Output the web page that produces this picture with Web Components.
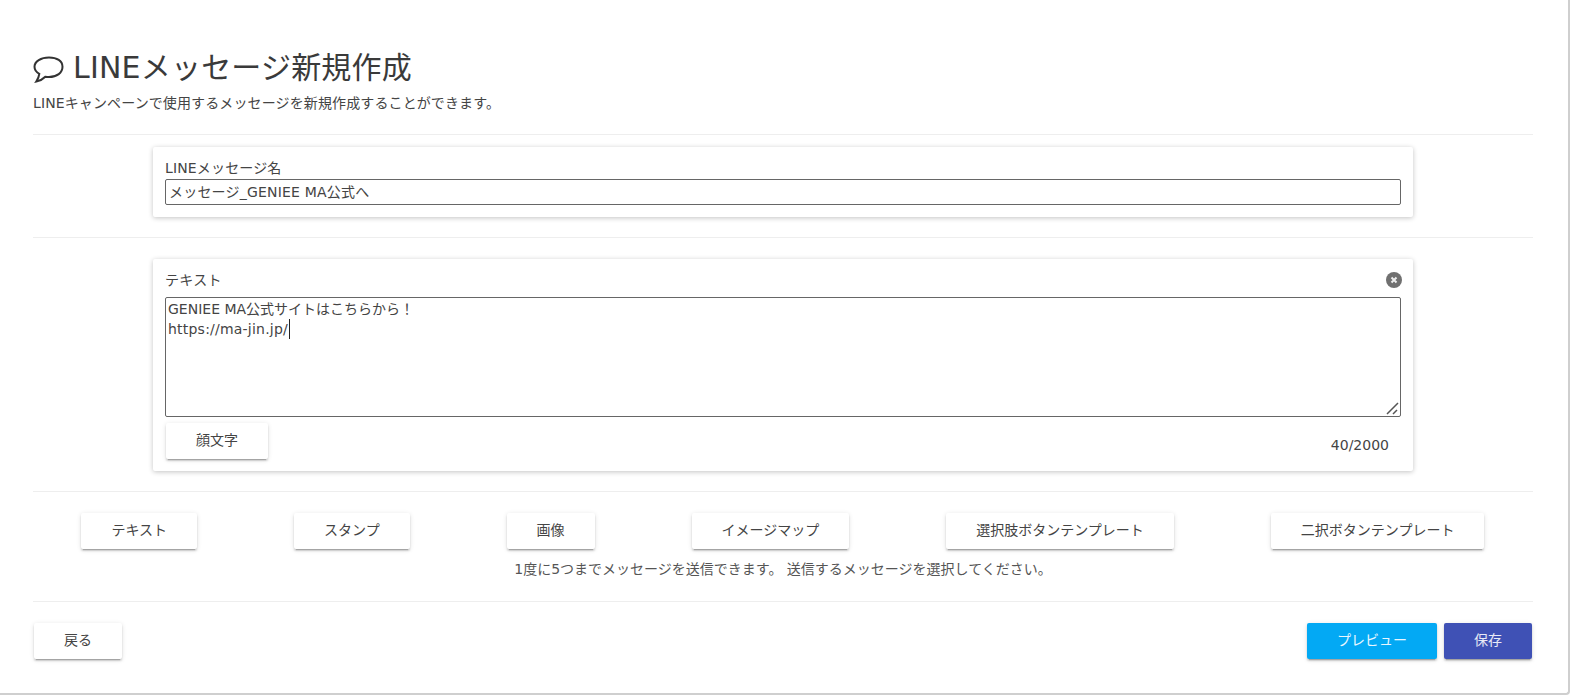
<!DOCTYPE html>
<html lang="ja"><head><meta charset="utf-8"><title>LINEメッセージ新規作成</title>
<style>
html,body{margin:0;padding:0;background:#fff}
body{font:14px/20px "DejaVu Sans","Noto Sans CJK JP",sans-serif;color:#444;height:695px;overflow:hidden}
</style></head><body>
<x-page>
  <x-heading title="LINEメッセージ新規作成" sub="LINEキャンペーンで使用するメッセージを新規作成することができます。"></x-heading>
  <x-rule style="--mt:21px"></x-rule>
  <x-card style="--pad:11px 12px 12px 12px">
    <x-name-field label="LINEメッセージ名" value="メッセージ_GENIEE MA公式へ"></x-name-field>
  </x-card>
  <x-rule style="--mt:20px"></x-rule>
  <x-card style="--mt:21px;--pad:11px 12px 12px 12px">
    <x-text-editor label="テキスト" count="40/2000"></x-text-editor>
  </x-card>
  <x-rule style="--mt:20px"></x-rule>
  <x-type-bar note="1度に5つまでメッセージを送信できます。 送信するメッセージを選択してください。">
    <x-btn>テキスト</x-btn><x-btn>スタンプ</x-btn><x-btn>画像</x-btn><x-btn>イメージマップ</x-btn><x-btn>選択肢ボタンテンプレート</x-btn><x-btn>二択ボタンテンプレート</x-btn>
  </x-type-bar>
  <x-rule style="--mt:22px"></x-rule>
  <x-actions>
    <x-btn slot="left" style="--w:88px">戻る</x-btn>
    <x-btn slot="right" kind="preview" style="--w:130px">プレビュー</x-btn>
    <x-btn slot="right" kind="save" style="--w:88px">保存</x-btn>
  </x-actions>
</x-page>
<script>
const def=(name,css,html)=>customElements.define(name,class extends HTMLElement{
  connectedCallback(){
    if(this.shadowRoot)return;
    const r=this.attachShadow({mode:'open'});
    const g=a=>(this.getAttribute(a)||'');
    r.innerHTML='<style>'+css+'</style>'+(typeof html==='function'?html(g):html);
  }
});
def('x-page',`:host{display:block;box-sizing:border-box;width:1570px;height:695px;border-right:2px solid #cfcfcf;border-bottom:2px solid #cfcfcf;border-bottom-right-radius:4px;padding:48px 35px 0 33px}`,`<slot></slot>`);
def('x-heading',`:host{display:block}
h1{margin:0;display:flex;align-items:center;gap:9px;font-size:30px;line-height:40px;font-weight:400;color:#3a3a3a;letter-spacing:.2px}
svg{width:31px;height:28px;flex:none;margin-top:3px}
p{margin:5px 0 0;font-size:14px;line-height:20px;color:#444;letter-spacing:.12px}`,
g=>`<h1><svg viewBox="0 0 31 28" fill="none" stroke="#333" stroke-width="2"><path d="M16 1.500C8 1.500 1.500 5.300 1.500 10.800c0 3 2 5.500 4.800 7.100-.3 2.600-1.300 5-3 7.600 3.700-.8 6.800-2.500 9-4.800 1.200.2 2.400.3 3.700.3 8 0 13.500-4.300 13.500-10.200S24 1.500 16 1.500Z"/></svg>${g('title')}</h1><p>${g('sub')}</p>`);
def('x-rule',`:host{display:block;height:1px;background:#eee;margin-top:var(--mt,20px)}`,``);
def('x-card',`:host{display:block;box-sizing:border-box;width:84%;margin:var(--mt,12px) auto 0;background:#fff;border-radius:2px;padding:var(--pad);box-shadow:0 1px 5px rgba(0,0,0,.24)}`,`<slot></slot>`);
def('x-name-field',`:host{display:block}
label{display:block;font-size:14px;line-height:20px;color:#444;margin-bottom:1px;letter-spacing:.15px}
.i{box-sizing:border-box;height:26px;border:1px solid #666;border-radius:2px;padding:0 3px;font-size:14px;line-height:24px;color:#444;white-space:nowrap;letter-spacing:.2px}`,
g=>`<label>${g('label')}</label><div class="i">${g('value')}</div>`);
def('x-text-editor',`:host{display:block}
.h{display:flex;justify-content:space-between;align-items:center;height:20px;margin-bottom:7px}
.h span{font-size:14px;line-height:20px;letter-spacing:.3px}
.x{width:16px;height:16px;margin-right:-1px;flex:none}
.t{position:relative;box-sizing:border-box;height:120px;border:1px solid #666;border-radius:2px;padding:1px 2px;font-size:14px;line-height:20px;color:#444}
.u{letter-spacing:.22px}
.c{display:inline-block;width:1px;height:20px;background:#222;vertical-align:top;margin-left:1px}
.g{position:absolute;right:1px;bottom:1px;width:13px;height:13px}
.f{display:flex;justify-content:space-between;align-items:flex-start;margin:6px 0 0 1px}
.n{font-size:14px;line-height:20px;margin:12px 12px 0 0}`,
g=>`<div class="h"><span>${g('label')}</span><svg class="x" viewBox="0 0 16 16"><circle cx="8" cy="8" r="8" fill="#707070"/><path d="M5.500 5.500l5 5m0-5l-5 5" stroke="#eee" stroke-width="2"/></svg></div>
<div class="t">GENIEE MA公式サイトはこちらから！<br><span class="u">https://ma-jin.jp/</span><span class="c"></span><svg class="g" viewBox="0 0 13 13" stroke="#555" stroke-width="1.500"><path d="M1 12 12 1M7 12l4-4"/></svg></div>
<div class="f"><x-btn style="--w:102px">顔文字</x-btn><span class="n">${g('count')}</span></div>`);
def('x-type-bar',`:host{display:block;padding-top:21px}
.b{display:flex;justify-content:space-around}
p{margin:10px 0 0;text-align:center;font-size:14px;line-height:20px;color:#555}`,
g=>`<div class="b"><slot></slot></div><p>${g('note')}</p>`);
def('x-actions',`:host{display:flex;justify-content:space-between;padding:21px 1px 0 1px}
.r{display:flex;gap:7px}`,`<div><slot name="left"></slot></div><div class="r"><slot name="right"></slot></div>`);
def('x-btn',`:host{display:inline-flex;align-items:center;justify-content:center;box-sizing:border-box;height:36px;min-width:var(--w,0);padding:0 30px 2px;background:#fff;color:#444;border-radius:2px;font-size:14px;line-height:20px;white-space:nowrap;box-shadow:0 2px 2px rgba(0,0,0,.14),0 3px 1px -2px rgba(0,0,0,.2),0 1px 5px rgba(0,0,0,.12)}
:host([kind=preview]){background:#03a9f4;color:#e8f6ff}
:host([kind=save]){background:#3f51b5;color:#e8eaf6}`,`<slot></slot>`);
</script>
</body></html>
